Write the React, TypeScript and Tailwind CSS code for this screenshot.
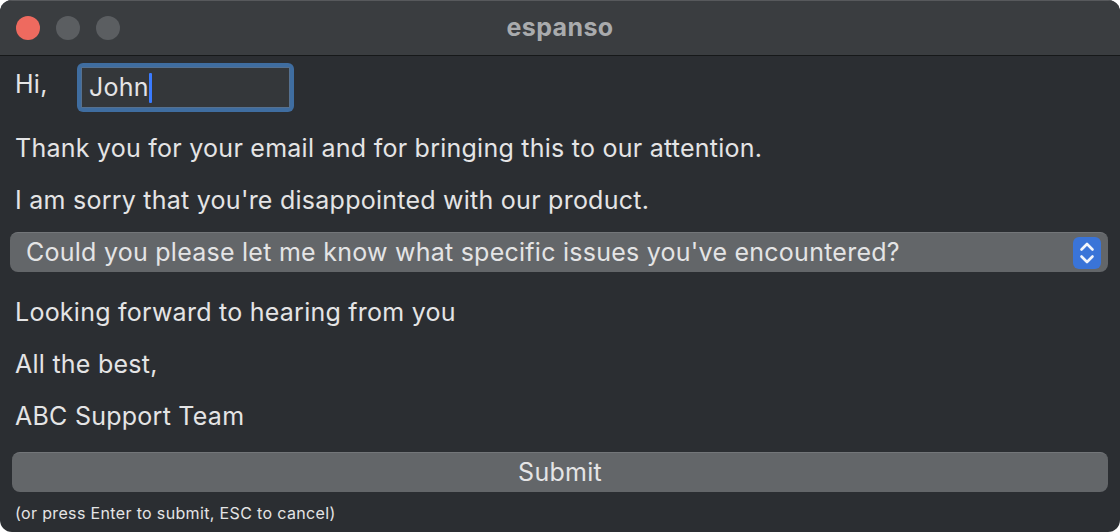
import React from "react";

export default function App() {
  const font = { fontFamily: "Inter, 'Noto Sans', sans-serif" };
  return (
    <div className="w-[1120px] h-[532px] bg-white" style={font}>
      <div className="w-full h-full rounded-[12px] overflow-hidden bg-[#2b2e32] flex flex-col">
        <div className="h-[56px] bg-[#3a3d40] border-t border-t-[#57595c] border-b border-b-[#161819] flex items-center relative shrink-0">
          <div className="flex gap-[16px] pl-[16px]">
            <div className="w-[24px] h-[24px] rounded-full bg-[#ee6a5f]" />
            <div className="w-[24px] h-[24px] rounded-full bg-[#5b5e61]" />
            <div className="w-[24px] h-[24px] rounded-full bg-[#5b5e61]" />
          </div>
          <div className="absolute inset-0 flex items-center justify-center text-[25px] tracking-[0.4px] font-bold text-[#a9abad]">
            espanso
          </div>
        </div>
        <div className="flex flex-col pl-[10px] pr-[12px] text-[25px] tracking-[0.25px] text-[#e4e4e5] leading-none">
          <div className="flex items-start pt-[7px] h-[56px]">
            <span className="w-[67px] pl-[5px] pt-[9px]">Hi,</span>
            <div className="w-[217px] h-[49px] rounded-[6px] bg-[#3f6da0] p-[4px]">
              <div className="w-full h-full bg-[#34373a] border border-[#55708f] flex items-center pl-[7px]">
                <span>John</span>
                <span className="w-[3px] h-[30px] bg-[#3a7bff] rounded-[1px]" />
              </div>
            </div>
          </div>
          <div className="pl-[5px] h-[52px] flex items-center mt-[10px]">Thank you for your email and for bringing this to our attention.</div>
          <div className="pl-[5px] h-[52px] flex items-center">I am sorry that you're disappointed with our product.</div>
          <div className="h-[40px] mt-[6px] rounded-[8px] bg-[#636669] border-t border-[#737679] flex items-center pl-[16px] pr-[7px]">
            <span className="flex-1">Could you please let me know what specific issues you've encountered?</span>
            <div className="w-[28px] h-[32px] rounded-[6px] bg-[#3a74d8] flex items-center justify-center">
              <svg width="18" height="26" viewBox="0 0 18 26" fill="none" stroke="#f2f5fb" strokeWidth="2.6" strokeLinecap="round" strokeLinejoin="round">
                <path d="M3.5 9.5 L9 4 L14.5 9.5" />
                <path d="M3.5 16.5 L9 22 L14.5 16.5" />
              </svg>
            </div>
          </div>
          <div className="pl-[5px] h-[52px] flex items-center mt-[14px]">Looking forward to hearing from you</div>
          <div className="pl-[5px] h-[52px] flex items-center">All the best,</div>
          <div className="pl-[5px] h-[52px] flex items-center">ABC Support Team</div>
          <div className="ml-[2px] h-[40px] mt-[10px] rounded-[8px] bg-[#636669] border-t border-[#737679] flex items-center justify-center">
            Submit
          </div>
          <div className="pl-[5px] text-[16px] tracking-[0.35px] mt-[13px] text-[#e4e4e5]">(or press Enter to submit, ESC to cancel)</div>
        </div>
      </div>
    </div>
  );
}
